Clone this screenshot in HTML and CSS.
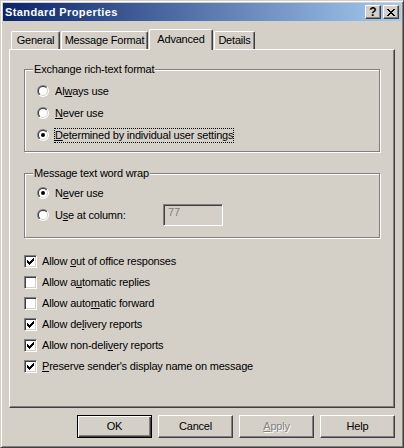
FILE: index.html
```html
<!DOCTYPE html>
<html>
<head>
<meta charset="utf-8">
<title>Standard Properties</title>
<link rel="stylesheet" href="styles.css">
</head>
<body>
<svg class="defs" width="0" height="0" aria-hidden="true">
  <defs>
    <linearGradient id="ringOuter" x1="0" y1="0" x2="1" y2="1">
      <stop offset="0.5" stop-color="#808080"/>
      <stop offset="0.5" stop-color="#ffffff"/>
    </linearGradient>
    <linearGradient id="ringInner" x1="0" y1="0" x2="1" y2="1">
      <stop offset="0.5" stop-color="#404040"/>
      <stop offset="0.5" stop-color="#d4d0c8"/>
    </linearGradient>
  </defs>
</svg>
<div class="window">
  <div class="titlebar">
    <span class="title">Standard Properties</span>
    <div class="caption-buttons">
      <span class="cbtn help">?</span>
      <span class="cbtn close"><svg width="8" height="7" viewBox="0 0 8 7" shape-rendering="crispEdges"><path d="M0 0h2v1H0z M6 0h2v1H6z M1 1h2v1H1z M5 1h2v1H5z M2 2h4v1H2z M3 3h2v1H3z M2 4h4v1H2z M1 5h2v1H1z M5 5h2v1H5z M0 6h2v1H0z M6 6h2v1H6z" fill="#000"/></svg></span>
    </div>
  </div>
  <div class="client">
    <div class="tabs">
      <div class="tab t-general">General</div>
      <div class="tab t-format">Message Format</div>
      <div class="tab active t-adv">Advanced</div>
      <div class="tab t-details">Details</div>
    </div>
    <div class="panel">
      <div class="group g1">
        <span class="legend">Exchange rich-text format</span>
        <div class="opt">
          <span class="radio"><svg width="12" height="12" viewBox="0 0 12 12"><circle cx="6" cy="6" r="6" fill="url(#ringOuter)"/><circle cx="6" cy="6" r="5" fill="url(#ringInner)"/><circle cx="6" cy="6" r="4" fill="#fff"/></svg></span>
          <span class="lbl">Al<u>w</u>ays use</span>
        </div>
        <div class="opt">
          <span class="radio"><svg width="12" height="12" viewBox="0 0 12 12"><circle cx="6" cy="6" r="6" fill="url(#ringOuter)"/><circle cx="6" cy="6" r="5" fill="url(#ringInner)"/><circle cx="6" cy="6" r="4" fill="#fff"/></svg></span>
          <span class="lbl"><u>N</u>ever use</span>
        </div>
        <div class="opt">
          <span class="radio"><svg width="12" height="12" viewBox="0 0 12 12"><circle cx="6" cy="6" r="6" fill="url(#ringOuter)"/><circle cx="6" cy="6" r="5" fill="url(#ringInner)"/><circle cx="6" cy="6" r="4" fill="#fff"/><circle cx="6" cy="6" r="2" fill="#000"/></svg></span>
          <span class="lbl focus"><u>D</u>etermined by individual user settings</span>
        </div>
      </div>
      <div class="group g2">
        <span class="legend">Message text word wrap</span>
        <div class="opt">
          <span class="radio"><svg width="12" height="12" viewBox="0 0 12 12"><circle cx="6" cy="6" r="6" fill="url(#ringOuter)"/><circle cx="6" cy="6" r="5" fill="url(#ringInner)"/><circle cx="6" cy="6" r="4" fill="#fff"/><circle cx="6" cy="6" r="2" fill="#000"/></svg></span>
          <span class="lbl">N<u>e</u>ver use</span>
        </div>
        <div class="opt">
          <span class="radio"><svg width="12" height="12" viewBox="0 0 12 12"><circle cx="6" cy="6" r="6" fill="url(#ringOuter)"/><circle cx="6" cy="6" r="5" fill="url(#ringInner)"/><circle cx="6" cy="6" r="4" fill="#fff"/></svg></span>
          <span class="lbl col">U<u>s</u>e at column:</span>
          <span class="textbox">77</span>
        </div>
      </div>
      <div class="checks">
        <div class="chk-row"><span class="cb"><svg width="7" height="7" viewBox="0 0 7 7" shape-rendering="crispEdges"><path d="M0 2h1v3H0z M1 3h1v3H1z M2 4h1v3H2z M3 3h1v3H3z M4 2h1v3H4z M5 1h1v3H5z M6 0h1v3H6z" fill="#000"/></svg></span><span class="lbl">Allow <u>o</u>ut of office responses</span></div>
        <div class="chk-row"><span class="cb"></span><span class="lbl">Allow a<u>u</u>tomatic replies</span></div>
        <div class="chk-row"><span class="cb"></span><span class="lbl">Allow auto<u>m</u>atic forward</span></div>
        <div class="chk-row"><span class="cb"><svg width="7" height="7" viewBox="0 0 7 7" shape-rendering="crispEdges"><path d="M0 2h1v3H0z M1 3h1v3H1z M2 4h1v3H2z M3 3h1v3H3z M4 2h1v3H4z M5 1h1v3H5z M6 0h1v3H6z" fill="#000"/></svg></span><span class="lbl">Allow de<u>l</u>ivery reports</span></div>
        <div class="chk-row"><span class="cb"><svg width="7" height="7" viewBox="0 0 7 7" shape-rendering="crispEdges"><path d="M0 2h1v3H0z M1 3h1v3H1z M2 4h1v3H2z M3 3h1v3H3z M4 2h1v3H4z M5 1h1v3H5z M6 0h1v3H6z" fill="#000"/></svg></span><span class="lbl">Allow non-deli<u>v</u>ery reports</span></div>
        <div class="chk-row"><span class="cb"><svg width="7" height="7" viewBox="0 0 7 7" shape-rendering="crispEdges"><path d="M0 2h1v3H0z M1 3h1v3H1z M2 4h1v3H2z M3 3h1v3H3z M4 2h1v3H4z M5 1h1v3H5z M6 0h1v3H6z" fill="#000"/></svg></span><span class="lbl"><u>P</u>reserve sender's display name on message</span></div>
      </div>
    </div>
    <div class="buttons">
      <span class="btn default">OK</span>
      <span class="btn">Cancel</span>
      <span class="btn disabled"><span><u>A</u>pply</span></span>
      <span class="btn">Help</span>
    </div>
  </div>
</div>
</body>
</html>
```

FILE: styles.css
```css
html, body {
  margin: 0;
  padding: 0;
}

body {
  background: #d4d0c8;
  font-family: "Liberation Sans", Arial, sans-serif;
  font-size: 11px;
  letter-spacing: -0.2px;
  color: #000;
}

.defs {
  display: block;
  width: 0;
  height: 0;
}

.window {
  width: 404px;
  height: 448px;
  box-sizing: border-box;
  border: 1px solid;
  border-color: #d4d0c8 #404040 #404040 #d4d0c8;
  box-shadow: inset 1px 1px #fff, inset -1px -1px #808080;
  padding: 2px;
  display: flex;
  flex-direction: column;
  background: #d4d0c8;
}

/* Title bar */
.titlebar {
  height: 18px;
  flex: none;
  display: flex;
  align-items: center;
  padding: 0 2px;
  background: linear-gradient(to right, #0a246a, #a6caf0);
}

.title {
  flex: 1;
  color: #fff;
  font-weight: bold;
  letter-spacing: 0.4px;
  line-height: 18px;
  white-space: nowrap;
}

.caption-buttons {
  display: flex;
  gap: 2px;
}

.cbtn {
  width: 16px;
  height: 14px;
  box-sizing: border-box;
  border: 1px solid;
  border-color: #fff #404040 #404040 #fff;
  box-shadow: inset -1px -1px #808080;
  background: #d4d0c8;
  display: flex;
  align-items: center;
  justify-content: center;
}

.help {
  font-weight: bold;
  font-size: 12px;
  line-height: 12px;
  letter-spacing: 0;
}

/* Client area */
.client {
  flex: 1;
  padding: 8px 6px 0 6px;
  display: flex;
  flex-direction: column;
}

.tabs {
  height: 20px;
  display: flex;
  align-items: flex-end;
  padding-left: 2px;
}

.tab {
  box-sizing: border-box;
  height: 18px;
  border: 1px solid;
  border-bottom: 0;
  border-color: #fff #404040 #404040 #fff;
  box-shadow: inset -1px 0 #808080;
  border-radius: 2px 2px 0 0;
  text-align: center;
  line-height: 17px;
  margin-right: 1px;
  white-space: nowrap;
  background: #d4d0c8;
}

.tab.active {
  height: 21px;
  line-height: 18px;
  margin-bottom: -1px;
  position: relative;
  z-index: 1;
}

.t-general { width: 49px; }
.t-format { width: 87px; }
.t-adv { width: 64px; }
.t-details { width: 41px; }

.panel {
  width: 386px;
  height: 359px;
  box-sizing: border-box;
  border: 1px solid;
  border-color: #fff #404040 #404040 #fff;
  box-shadow: inset -1px -1px #808080;
  padding: 19px 0 0 14px;
}

/* Group boxes */
.group {
  position: relative;
  width: 356px;
  box-sizing: border-box;
  border: 1px solid #808080;
  box-shadow: 1px 1px #fff, inset 1px 1px #fff;
}

.g1 {
  height: 83px;
  padding: 10px 0 0 12px;
}

.g2 {
  height: 65px;
  margin-top: 21px;
  padding: 8px 0 0 12px;
}

.legend {
  position: absolute;
  top: -7px;
  left: 8px;
  padding: 0 1px;
  background: #d4d0c8;
  line-height: 13px;
  white-space: nowrap;
}

.opt {
  display: flex;
  align-items: center;
  height: 22px;
}

.radio {
  width: 13px;
  height: 12px;
  margin-right: 4px;
  display: flex;
}

.lbl {
  border: 1px solid transparent;
  line-height: 13px;
  white-space: nowrap;
}

.lbl.focus {
  border: 1px dotted #000;
}

.lbl.col {
  width: 109px;
  box-sizing: border-box;
}

.textbox {
  width: 60px;
  height: 22px;
  box-sizing: border-box;
  border: 1px solid;
  border-color: #808080 #fff #fff #808080;
  box-shadow: inset 1px 1px #404040, inset -1px -1px #d4d0c8;
  color: #808080;
  padding: 1px 0 0 4px;
  line-height: 13px;
  align-self: flex-start;
}

/* Checkboxes */
.checks {
  margin-top: 13px;
}

.chk-row {
  display: flex;
  align-items: center;
  height: 21px;
}

.cb {
  width: 13px;
  height: 13px;
  box-sizing: border-box;
  border: 1px solid;
  border-color: #808080 #fff #fff #808080;
  box-shadow: inset 1px 1px #404040, inset -1px -1px #d4d0c8;
  background: #fff;
  margin-right: 4px;
  display: flex;
  align-items: center;
  justify-content: center;
}

/* Dialog buttons */
.buttons {
  display: flex;
  justify-content: flex-end;
  gap: 6px;
  margin-top: 7px;
}

.btn {
  width: 75px;
  height: 23px;
  box-sizing: border-box;
  border: 1px solid;
  border-color: #fff #404040 #404040 #fff;
  box-shadow: inset -1px -1px #808080;
  display: flex;
  align-items: center;
  justify-content: center;
  line-height: 13px;
}

.btn.default {
  border-color: #000;
  box-shadow: inset 1px 1px #fff, inset -1px -1px #404040, inset -2px -2px #808080;
}

.btn.disabled {
  color: #808080;
  text-shadow: 1px 1px #fff;
}
```
